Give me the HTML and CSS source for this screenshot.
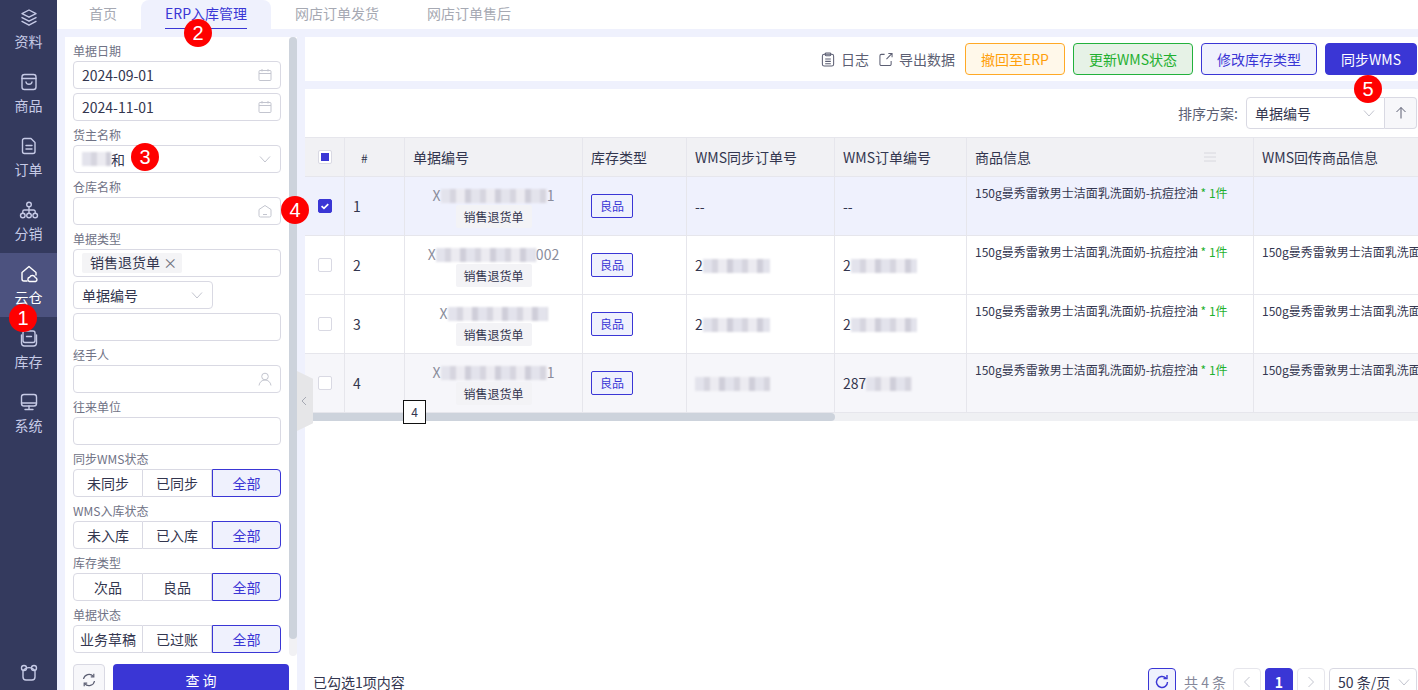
FILE: index.html
```html
<!DOCTYPE html>
<html lang="zh-CN">
<head>
  <meta charset="UTF-8">
  <title>ERP入库管理</title>
  <link rel="stylesheet" href="styles.css">
</head>
<body>
  <div class="app">
    <!-- 左侧导航 -->
    <nav class="side-nav">
      <a class="nav-item">
        <svg viewBox="0 0 20 20"><path d="M10 2l7 3.6-7 3.6-7-3.6z"/><path d="M3 9.6l7 3.6 7-3.6"/><path d="M3 13.4l7 3.8 7-3.8"/></svg>
        <span>资料</span>
      </a>
      <a class="nav-item">
        <svg viewBox="0 0 20 20"><rect x="3" y="2.5" width="14" height="15" rx="2.5"/><path d="M3 6.5h14"/><path d="M7 10c.5 3 5.500 3 6 0"/></svg>
        <span>商品</span>
      </a>
      <a class="nav-item">
        <svg viewBox="0 0 20 20"><path d="M5.500 2.500h6.500l4 4v9a2 2 0 0 1-2 2h-8.500a2 2 0 0 1-2-2v-11a2 2 0 0 1 2-2z"/><path d="M7 9.500h6M7 13h6"/></svg>
        <span>订单</span>
      </a>
      <a class="nav-item">
        <svg viewBox="0 0 20 20"><circle cx="10" cy="4.500" r="2.300"/><circle cx="3.800" cy="15.500" r="2.300"/><circle cx="10" cy="15.500" r="2.300"/><circle cx="16.200" cy="15.500" r="2.300"/><path d="M10 7v6M3.800 13v-1.500a1.500 1.500 0 0 1 1.500-1.500h9.400a1.500 1.500 0 0 1 1.500 1.500v1.500"/></svg>
        <span>分销</span>
      </a>
      <a class="nav-item active">
        <svg viewBox="0 0 20 20"><path d="M8 17h-3a2 2 0 0 1-2-2v-6.500l7-6 7 6v2.500"/><path d="M10.500 17.500a2.200 2.200 0 0 1 .2-4.300 3 3 0 0 1 5.600.4 2 2 0 0 1 .2 3.900z"/></svg>
        <span>云仓</span>
      </a>
      <a class="nav-item">
        <svg viewBox="0 0 20 20"><rect x="4" y="3" width="12" height="11.500" rx="2"/><path d="M7.500 8.500h5"/><path d="M2.500 7v8a3 3 0 0 0 3 3h9a3 3 0 0 0 3-3v-8"/></svg>
        <span>库存</span>
      </a>
      <a class="nav-item">
        <svg viewBox="0 0 20 20"><rect x="2.500" y="2.500" width="15" height="11.500" rx="2.500"/><path d="M2.500 11h15M10 14v3.500M6 17.500h8"/></svg>
        <span>系统</span>
      </a>
      <a class="nav-item nav-bottom">
        <svg viewBox="0 0 20 20"><circle cx="5" cy="5" r="2.500"/><circle cx="15" cy="5" r="2.500"/><path d="M4 8a7 7 0 0 1 12 0v6a3 3 0 0 1-3 3h-6a3 3 0 0 1-3-3z"/></svg>
      </a>
    </nav>

    <div class="main">
      <!-- 页签 -->
      <div class="tabs">
        <a class="tab">首页</a>
        <a class="tab active"><span>ERP入库管理</span></a>
        <a class="tab">网店订单发货</a>
        <a class="tab">网店订单售后</a>
      </div>

      <div class="content">
        <!-- 查询条件 -->
        <aside class="filter">
          <div class="filter-body">
            <div class="filter-fields">
              <label class="field-label">单据日期</label>
              <div class="input">2024-09-01
                <svg class="input-icon" viewBox="0 0 14 14"><rect x="1" y="2.500" width="12" height="10" rx="1"/><path d="M1 5.500h12M4 1v2.500M10 1v2.500"/></svg>
              </div>
              <div class="input">2024-11-01
                <svg class="input-icon" viewBox="0 0 14 14"><rect x="1" y="2.500" width="12" height="10" rx="1"/><path d="M1 5.500h12M4 1v2.500M10 1v2.500"/></svg>
              </div>

              <label class="field-label">货主名称</label>
              <div class="input"><span class="owner"><i class="mosaic mosaic-owner"></i>和</span>
                <svg class="input-icon" viewBox="0 0 14 14"><path d="M2 4.500l5 5.500 5-5.500"/></svg>
              </div>

              <label class="field-label">仓库名称</label>
              <div class="input">
                <svg class="input-icon" viewBox="0 0 14 14"><path d="M1 5.500l6-4 6 4v6a1.500 1.500 0 0 1-1.500 1.500h-9a1.500 1.500 0 0 1-1.500-1.500z"/><path d="M5 10.500h4"/></svg>
              </div>

              <label class="field-label">单据类型</label>
              <div class="input">
                <span class="chip">销售退货单 <b>×</b></span>
              </div>

              <div class="input input-short">单据编号
                <svg class="input-icon" viewBox="0 0 14 14"><path d="M2 4.500l5 5.500 5-5.500"/></svg>
              </div>
              <div class="input"></div>

              <label class="field-label">经手人</label>
              <div class="input">
                <svg class="input-icon" viewBox="0 0 14 14"><circle cx="7" cy="4.500" r="3.300"/><path d="M1 13.500c.5-3.500 3-5.500 6-5.500s5.500 2 6 5.500"/></svg>
              </div>

              <label class="field-label">往来单位</label>
              <div class="input"></div>

              <label class="field-label">同步WMS状态</label>
              <div class="segment">
                <span>未同步</span><span>已同步</span><span class="on">全部</span>
              </div>

              <label class="field-label">WMS入库状态</label>
              <div class="segment">
                <span>未入库</span><span>已入库</span><span class="on">全部</span>
              </div>

              <label class="field-label">库存类型</label>
              <div class="segment">
                <span>次品</span><span>良品</span><span class="on">全部</span>
              </div>

              <label class="field-label">单据状态</label>
              <div class="segment">
                <span>业务草稿</span><span>已过账</span><span class="on">全部</span>
              </div>
            </div>
            <div class="scroll-track"><div class="scroll-thumb"></div></div>
          </div>

          <div class="filter-actions">
            <button class="reset-btn">
              <svg viewBox="0 0 16 16"><path d="M2.500 7a5.600 5.600 0 0 1 9.800-2.600"/><path d="M13.500 9a5.600 5.600 0 0 1-9.800 2.600"/><path d="M12.800 1.800v3h-3M3.200 14.200v-3h3"/></svg>
            </button>
            <button class="query-btn">查 询</button>
          </div>
        </aside>

        <div class="result">
          <!-- 操作栏 -->
          <div class="toolbar">
            <a class="tool-link">
              <svg viewBox="0 0 14 16"><rect x="1" y="2.500" width="12" height="12.500" rx="2"/><rect x="4" y="1" width="6" height="3" rx="1"/><path d="M4 7.500h6M4 10h6M4 12.500h6"/></svg>
              日志
            </a>
            <a class="tool-link">
              <svg viewBox="0 0 15 15"><path d="M6 2h-3.500a1.500 1.500 0 0 0-1.500 1.500v9a1.500 1.500 0 0 0 1.500 1.500h9a1.500 1.500 0 0 0 1.500-1.500v-3.500"/><path d="M8 7l6-6M10 1h4v4"/></svg>
              导出数据
            </a>
            <button class="btn btn-orange">撤回至ERP</button>
            <button class="btn btn-green">更新WMS状态</button>
            <button class="btn btn-plain">修改库存类型</button>
            <button class="btn btn-primary">同步WMS</button>
          </div>

          <div class="table-panel">
            <div class="sort-row">
              <span class="sort-label">排序方案:</span>
              <div class="sort-select">单据编号
                <svg viewBox="0 0 14 14"><path d="M2 4.500l5 5.500 5-5.500"/></svg>
              </div>
              <button class="sort-dir">
                <svg viewBox="0 0 14 14"><path d="M7 12.500v-11M2.500 6l4.500-4.500 4.500 4.500"/></svg>
              </button>
            </div>

            <div class="table-wrap">
              <table class="grid">
                <colgroup>
                  <col class="c-check"><col class="c-no"><col class="c-code"><col class="c-type">
                  <col class="c-sync"><col class="c-order"><col class="c-goods"><col class="c-back">
                </colgroup>
                <thead>
                  <tr>
                    <th><span class="check partial"></span></th>
                    <th class="th-no">#</th>
                    <th>单据编号</th>
                    <th>库存类型</th>
                    <th>WMS同步订单号</th>
                    <th>WMS订单编号</th>
                    <th><div class="th-flex">商品信息
                      <svg viewBox="0 0 12 10"><path d="M0 1h12M0 5h12M0 9h12"/></svg>
                    </div></th>
                    <th>WMS回传商品信息</th>
                  </tr>
                </thead>
                <tbody>
                  <tr class="selected">
                    <td><span class="check checked"><svg viewBox="0 0 14 14"><path d="M3 7.200l2.800 2.600 5-5"/></svg></span></td>
                    <td>1</td>
                    <td class="code-cell">
                      <div>X<i class="mosaic mosaic-a"></i>1</div>
                      <span class="doc-tag">销售退货单</span>
                    </td>
                    <td><span class="type-tag">良品</span></td>
                    <td>--</td>
                    <td>--</td>
                    <td class="goods">150g曼秀雷敦男士洁面乳洗面奶-抗痘控油 <em>* 1件</em></td>
                    <td class="goods"></td>
                  </tr>
                  <tr>
                    <td><span class="check"></span></td>
                    <td>2</td>
                    <td class="code-cell">
                      <div>X<i class="mosaic mosaic-b"></i>002</div>
                      <span class="doc-tag">销售退货单</span>
                    </td>
                    <td><span class="type-tag">良品</span></td>
                    <td>2<i class="mosaic mosaic-c"></i></td>
                    <td>2<i class="mosaic mosaic-d"></i></td>
                    <td class="goods">150g曼秀雷敦男士洁面乳洗面奶-抗痘控油 <em>* 1件</em></td>
                    <td class="goods">150g曼秀雷敦男士洁面乳洗面奶-抗痘控油</td>
                  </tr>
                  <tr>
                    <td><span class="check"></span></td>
                    <td>3</td>
                    <td class="code-cell">
                      <div>X<i class="mosaic mosaic-b"></i></div>
                      <span class="doc-tag">销售退货单</span>
                    </td>
                    <td><span class="type-tag">良品</span></td>
                    <td>2<i class="mosaic mosaic-c"></i></td>
                    <td>2<i class="mosaic mosaic-d"></i></td>
                    <td class="goods">150g曼秀雷敦男士洁面乳洗面奶-抗痘控油 <em>* 1件</em></td>
                    <td class="goods">150g曼秀雷敦男士洁面乳洗面奶-抗痘控油</td>
                  </tr>
                  <tr class="striped">
                    <td><span class="check"></span></td>
                    <td>4</td>
                    <td class="code-cell">
                      <div>X<i class="mosaic mosaic-a"></i>1</div>
                      <span class="doc-tag">销售退货单</span>
                    </td>
                    <td><span class="type-tag">良品</span></td>
                    <td><i class="mosaic mosaic-e"></i></td>
                    <td>287<i class="mosaic mosaic-f"></i></td>
                    <td class="goods">150g曼秀雷敦男士洁面乳洗面奶-抗痘控油 <em>* 1件</em></td>
                    <td class="goods">150g曼秀雷敦男士洁面乳洗面奶-抗痘控油</td>
                  </tr>
                </tbody>
              </table>
            </div>
            <div class="h-scroll"><div class="h-thumb"></div></div>

            <div class="pager-row">
              <span class="picked">已勾选1项内容</span>
              <div class="pager">
                <button class="pg-refresh">
                  <svg viewBox="0 0 16 16"><path d="M13.500 8a5.500 5.500 0 1 1-1.700-4"/><path d="M13 1v3.500h-3.500"/></svg>
                </button>
                <span class="pg-total">共 4 条</span>
                <button class="pg-btn"><svg viewBox="0 0 10 14"><path d="M7.500 2l-5 5 5 5"/></svg></button>
                <button class="pg-btn current">1</button>
                <button class="pg-btn"><svg viewBox="0 0 10 14"><path d="M2.500 2l5 5-5 5"/></svg></button>
                <div class="pg-size">50 条/页
                  <svg viewBox="0 0 14 14"><path d="M2 4.500l5 5.500 5-5.500"/></svg>
                </div>
              </div>
            </div>
          </div>
        </div>
      </div>
    </div>
  </div>

  <!-- 浮在页面上的标注 -->
  <div class="collapse-handle"><svg viewBox="0 0 6 10"><path d="M5 1l-4 4 4 4"/></svg></div>
  <div class="count-box">4</div>
  <span class="mark mark-1">1</span>
  <span class="mark mark-2">2</span>
  <span class="mark mark-3">3</span>
  <span class="mark mark-4">4</span>
  <span class="mark mark-5">5</span>
</body>
</html>
```

FILE: styles.css
```css
/* 基础 */
html, body {
  height: 100%;
}
body {
  margin: 0;
  overflow: hidden;
  position: relative;
  font-family: "Noto Sans CJK SC", "Noto Sans", sans-serif;
  font-size: 14px;
  color: #33364f;
  background: #eff1fd;
}
button {
  font-family: inherit;
  cursor: pointer;
}
svg {
  fill: none;
  stroke: currentColor;
}
.app {
  display: flex;
  height: 698px;
}

/* 左侧导航 */
.side-nav {
  width: 57px;
  flex: none;
  background: #343a5e;
  display: flex;
  flex-direction: column;
  padding-top: 0;
  color: #c6cae6;
}
.nav-item {
  height: 64px;
  flex: none;
  display: flex;
  flex-direction: column;
  align-items: center;
  justify-content: flex-start;
  padding-top: 11px;
  box-sizing: border-box;
}
.nav-item:first-child {
  height: 61px;
  padding-top: 8px;
}
.nav-item svg {
  width: 20px;
  height: 20px;
  stroke-width: 1.4;
  stroke-linejoin: round;
  stroke-linecap: round;
}
.nav-item span {
  line-height: 20px;
  margin-top: 3px;
}
.nav-item.active {
  background: #4c527f;
  color: #fff;
}
.nav-bottom {
  margin-top: auto;
  height: 35px;
  padding-top: 0;
}

/* 页签 */
.main {
  flex: 1;
  min-width: 0;
  display: flex;
  flex-direction: column;
}
.tabs {
  height: 29px;
  flex: none;
  background: #fff;
  display: flex;
  padding-left: 8px;
}
.tab {
  padding: 0 24px;
  line-height: 27px;
  color: #a6a9b3;
}
.tab.active {
  background: #eff1fd;
  color: #3a36d5;
  border-radius: 8px 8px 0 0;
}
.tab.active span {
  display: block;
  height: 29px;
  box-sizing: border-box;
  border-bottom: 1px solid #3a36d5;
}
.content {
  flex: 1;
  min-height: 0;
  display: flex;
  gap: 8px;
  padding: 8px 0 0 8px;
}

/* 查询条件 */
.filter {
  width: 232px;
  flex: none;
  background: #fff;
  display: flex;
  flex-direction: column;
}
.filter-body {
  flex: 1;
  min-height: 0;
  display: flex;
}
.filter-fields {
  flex: 1;
  min-width: 0;
  padding: 4px 8px 0;
  overflow: hidden;
}
.field-label {
  display: block;
  height: 20px;
  line-height: 20px;
  font-size: 12px;
  color: #6f7285;
}
.input {
  position: relative;
  height: 28px;
  box-sizing: border-box;
  border: 1px solid #d9d9e3;
  border-radius: 4px;
  padding-left: 8px;
  line-height: 26px;
  margin-bottom: 4px;
  background: #fff;
}
.input-short {
  width: 140px;
}
.input-icon {
  position: absolute;
  right: 8px;
  top: 6px;
  width: 14px;
  height: 14px;
  color: #c3c5cf;
}
.owner {
  display: inline-flex;
  align-items: center;
}
.chip {
  display: inline-block;
  height: 20px;
  line-height: 19px;
  margin-top: 3px;
  padding: 0 5px 0 8px;
  background: #f4f4f6;
  border-radius: 2px;
  vertical-align: top;
}
.chip b {
  font-weight: 400;
  color: #70737f;
}
.segment {
  display: grid;
  grid-template-columns: 70px 69px 69px;
  height: 28px;
  margin-bottom: 4px;
}
.segment span {
  box-sizing: border-box;
  border: 1px solid #d9d9e3;
  border-left: 0;
  text-align: center;
  line-height: 26px;
  white-space: nowrap;
}
.segment span:first-child {
  border-left: 1px solid #d9d9e3;
  border-radius: 4px 0 0 4px;
}
.segment .on {
  border: 1px solid #3a36d5;
  background: #eff1fd;
  color: #3a36d5;
  border-radius: 0 4px 4px 0;
}
.scroll-track {
  width: 8px;
  flex: none;
  background: #f1f1f4;
  border-radius: 4px;
}
.scroll-thumb {
  height: 602px;
  background: #cdd3dc;
  border-radius: 4px;
}
.filter-actions {
  flex: none;
  display: flex;
  gap: 8px;
  padding: 8px 8px 2px;
}
.reset-btn {
  width: 32px;
  height: 32px;
  padding: 0;
  background: #f7f7fa;
  border: 1px solid #d9d9e3;
  border-radius: 4px;
  color: #5c5f73;
  display: flex;
  align-items: center;
  justify-content: center;
}
.reset-btn svg {
  width: 16px;
  height: 16px;
  stroke-width: 1.2;
}
.query-btn {
  flex: 1;
  height: 32px;
  background: #3a36d5;
  color: #fff;
  border: 0;
  border-radius: 4px;
  font-size: 14px;
}

/* 操作栏 */
.result {
  flex: 1;
  min-width: 0;
  display: flex;
  flex-direction: column;
  gap: 8px;
}
.toolbar {
  height: 44px;
  flex: none;
  background: #fff;
  display: flex;
  align-items: center;
  justify-content: flex-end;
  gap: 8px;
  padding: 0 1px 0 0;
}
.tool-link {
  display: flex;
  align-items: center;
  gap: 6px;
  color: #5c5f73;
  margin-right: 2px;
}
.tool-link svg {
  width: 14px;
  height: 15px;
  stroke-width: 1.1;
}
.btn {
  height: 32px;
  padding: 0 15px;
  border-radius: 4px;
  border: 1px solid;
  font-size: 14px;
  white-space: nowrap;
}
.btn-orange {
  color: #ff9f0a;
  border-color: #ffa926;
  background: #fff8ea;
}
.btn-green {
  color: #1fb02f;
  border-color: #22b13c;
  background: #e6f2e6;
}
.btn-plain {
  color: #3a36d5;
  border-color: #3a36d5;
  background: #eff1fd;
}
.btn-primary {
  color: #fff;
  border-color: #3a36d5;
  background: #3a36d5;
}

/* 表格 */
.table-panel {
  flex: 1;
  min-height: 0;
  background: #fff;
  display: flex;
  flex-direction: column;
}
.sort-row {
  height: 48px;
  flex: none;
  display: flex;
  align-items: center;
  justify-content: flex-end;
  padding-right: 1px;
}
.sort-label {
  color: #5c5f73;
  margin-right: 8px;
}
.sort-select {
  position: relative;
  width: 139px;
  height: 32px;
  box-sizing: border-box;
  border: 1px solid #d9d9e3;
  border-radius: 4px 0 0 4px;
  padding-left: 8px;
  line-height: 30px;
}
.sort-select svg {
  position: absolute;
  right: 8px;
  top: 8px;
  width: 14px;
  height: 14px;
  color: #c3c5cf;
}
.sort-dir {
  width: 32px;
  height: 32px;
  padding: 0;
  background: #f7f7fa;
  border: 1px solid #d9d9e3;
  border-left: 0;
  border-radius: 0 4px 4px 0;
  color: #5c5f73;
  display: flex;
  align-items: center;
  justify-content: center;
}
.sort-dir svg {
  width: 14px;
  height: 14px;
}
.table-wrap {
  flex: none;
  overflow: hidden;
}
.grid {
  table-layout: fixed;
  width: 1249px;
  border-collapse: separate;
  border-spacing: 0;
}
.c-check { width: 40px; }
.c-no { width: 60px; }
.c-code { width: 178px; }
.c-type { width: 104px; }
.c-sync { width: 148px; }
.c-order { width: 132px; }
.c-goods { width: 287px; }
.c-back { width: 300px; }
.grid th {
  height: 40px;
  box-sizing: border-box;
  padding: 0 8px;
  background: #f1f1f4;
  border-top: 1px solid #e6e6ec;
  border-right: 1px solid #e6e6ec;
  border-bottom: 1px solid #e6e6ec;
  font-weight: 400;
  text-align: left;
  white-space: nowrap;
}
.grid th:first-child,
.grid td:first-child {
  padding: 0 0 0 13px;
}
.grid .th-no {
  padding-left: 16px;
  font-size: 12px;
}
.th-flex {
  display: flex;
  justify-content: space-between;
  align-items: center;
  padding-right: 29px;
}
.th-flex svg {
  width: 12px;
  height: 10px;
  color: #d8d8de;
}
.grid td {
  height: 59px;
  box-sizing: border-box;
  padding: 0 8px;
  border-right: 1px solid #e6e6ec;
  border-bottom: 1px solid #e6e6ec;
  white-space: nowrap;
  overflow: hidden;
}
.selected td {
  background: #eff1fd;
}
.striped td {
  background: #f6f6fa;
}
.check {
  display: block;
  position: relative;
  width: 14px;
  height: 14px;
  box-sizing: border-box;
  border: 1px solid #d9d9e3;
  border-radius: 2px;
  background: #fff;
}
.check.partial::after {
  content: "";
  position: absolute;
  left: 2px;
  top: 2px;
  width: 8px;
  height: 8px;
  background: #3a36d5;
}
.check.checked {
  background: #3a36d5;
  border-color: #3a36d5;
  color: #fff;
}
.check svg {
  display: block;
  width: 12px;
  height: 12px;
  stroke-width: 2;
}
.code-cell {
  text-align: center;
  line-height: 20px;
}
.code-cell div {
  color: #8a8d9c;
}
.doc-tag {
  display: block;
  width: 76px;
  height: 23px;
  margin: 0 auto;
  line-height: 23px;
  background: #f3f3f6;
  border-radius: 2px;
  font-size: 12px;
}
.type-tag {
  display: inline-block;
  width: 42px;
  height: 24px;
  box-sizing: border-box;
  border: 1px solid #3a36d5;
  border-radius: 2px;
  background: #eff1fd;
  color: #3a36d5;
  font-size: 12px;
  line-height: 22px;
  text-align: center;
  vertical-align: middle;
}
.grid .goods {
  vertical-align: top;
  padding-top: 6px;
  font-size: 12px;
  line-height: 20px;
}
.goods em {
  font-style: normal;
  color: #1fb02f;
}

/* 打码块 */
.mosaic {
  display: inline-block;
  height: 14px;
  vertical-align: -2px;
  filter: blur(0.8px);
  background: repeating-linear-gradient(90deg, #e3e3ec 0 9px, #d6d5df 9px 15px, #ecebf1 15px 24px, #cfced9 24px 30px);
}
.mosaic-owner { width: 29px; }
.mosaic-a { width: 106px; }
.mosaic-b { width: 100px; }
.mosaic-c { width: 67px; }
.mosaic-d { width: 66px; }
.mosaic-e { width: 75px; }
.mosaic-f { width: 46px; }

/* 表格滚动条 */
.h-scroll {
  height: 8px;
  flex: none;
  background: #eff0f3;
}
.h-thumb {
  width: 530px;
  height: 8px;
  background: #cdd3dc;
  border-radius: 0 4px 4px 0;
}

/* 分页 */
.pager-row {
  margin-top: auto;
  flex: none;
  display: flex;
  justify-content: space-between;
  align-items: center;
  height: 28px;
  padding: 0 1px 2px 8px;
}
.picked {
  line-height: 26px;
}
.pager {
  display: flex;
  align-items: center;
  gap: 4px;
  color: #85889a;
}
.pg-refresh {
  width: 28px;
  height: 28px;
  padding: 0;
  margin-right: 4px;
  background: #eff1fd;
  border: 1px solid #3a36d5;
  border-radius: 4px;
  color: #3a36d5;
  display: flex;
  align-items: center;
  justify-content: center;
}
.pg-refresh svg {
  width: 16px;
  height: 16px;
  stroke-width: 1.4;
}
.pg-total {
  margin-right: 1px;
  width: 44px;
  white-space: nowrap;
}
.pg-btn {
  width: 28px;
  height: 28px;
  padding: 0;
  background: #fff;
  border: 1px solid #e6e6ec;
  border-radius: 4px;
  color: #c3c5cf;
  font-size: 14px;
  display: flex;
  align-items: center;
  justify-content: center;
}
.pg-btn svg {
  width: 10px;
  height: 14px;
}
.pg-btn.current {
  background: #3a36d5;
  border-color: #3a36d5;
  color: #fff;
  font-weight: 700;
}
.pg-size {
  position: relative;
  width: 88px;
  height: 28px;
  box-sizing: border-box;
  border: 1px solid #d9d9e3;
  border-radius: 4px;
  padding-left: 8px;
  line-height: 26px;
  color: #33364f;
  white-space: nowrap;
}
.pg-size svg {
  position: absolute;
  right: 5px;
  top: 6px;
  width: 14px;
  height: 14px;
  color: #c3c5cf;
}

/* 浮层标注 */
.collapse-handle {
  position: absolute;
  left: 297px;
  top: 371px;
  width: 16px;
  height: 60px;
  background: #e6e6e8;
  clip-path: polygon(0 0, 100% 13%, 100% 87%, 0 100%);
  display: flex;
  align-items: center;
  padding-left: 4px;
  box-sizing: border-box;
  color: #a6a9b3;
}
.collapse-handle svg {
  width: 6px;
  height: 10px;
}
.count-box {
  position: absolute;
  left: 403px;
  top: 400px;
  width: 23px;
  height: 24px;
  box-sizing: border-box;
  border: 1px solid #111;
  background: #fff;
  font-size: 12px;
  line-height: 22px;
  text-align: center;
}
.mark {
  position: absolute;
  width: 28px;
  height: 28px;
  border-radius: 50%;
  background: #f00;
  color: #fff;
  font-family: "Liberation Sans", sans-serif;
  font-size: 20px;
  line-height: 28px;
  text-align: center;
}
.mark-1 { left: 9px; top: 304px; }
.mark-2 { left: 184px; top: 19px; }
.mark-3 { left: 131px; top: 143px; }
.mark-4 { left: 281px; top: 196px; }
.mark-5 { left: 1354px; top: 75px; }
```
